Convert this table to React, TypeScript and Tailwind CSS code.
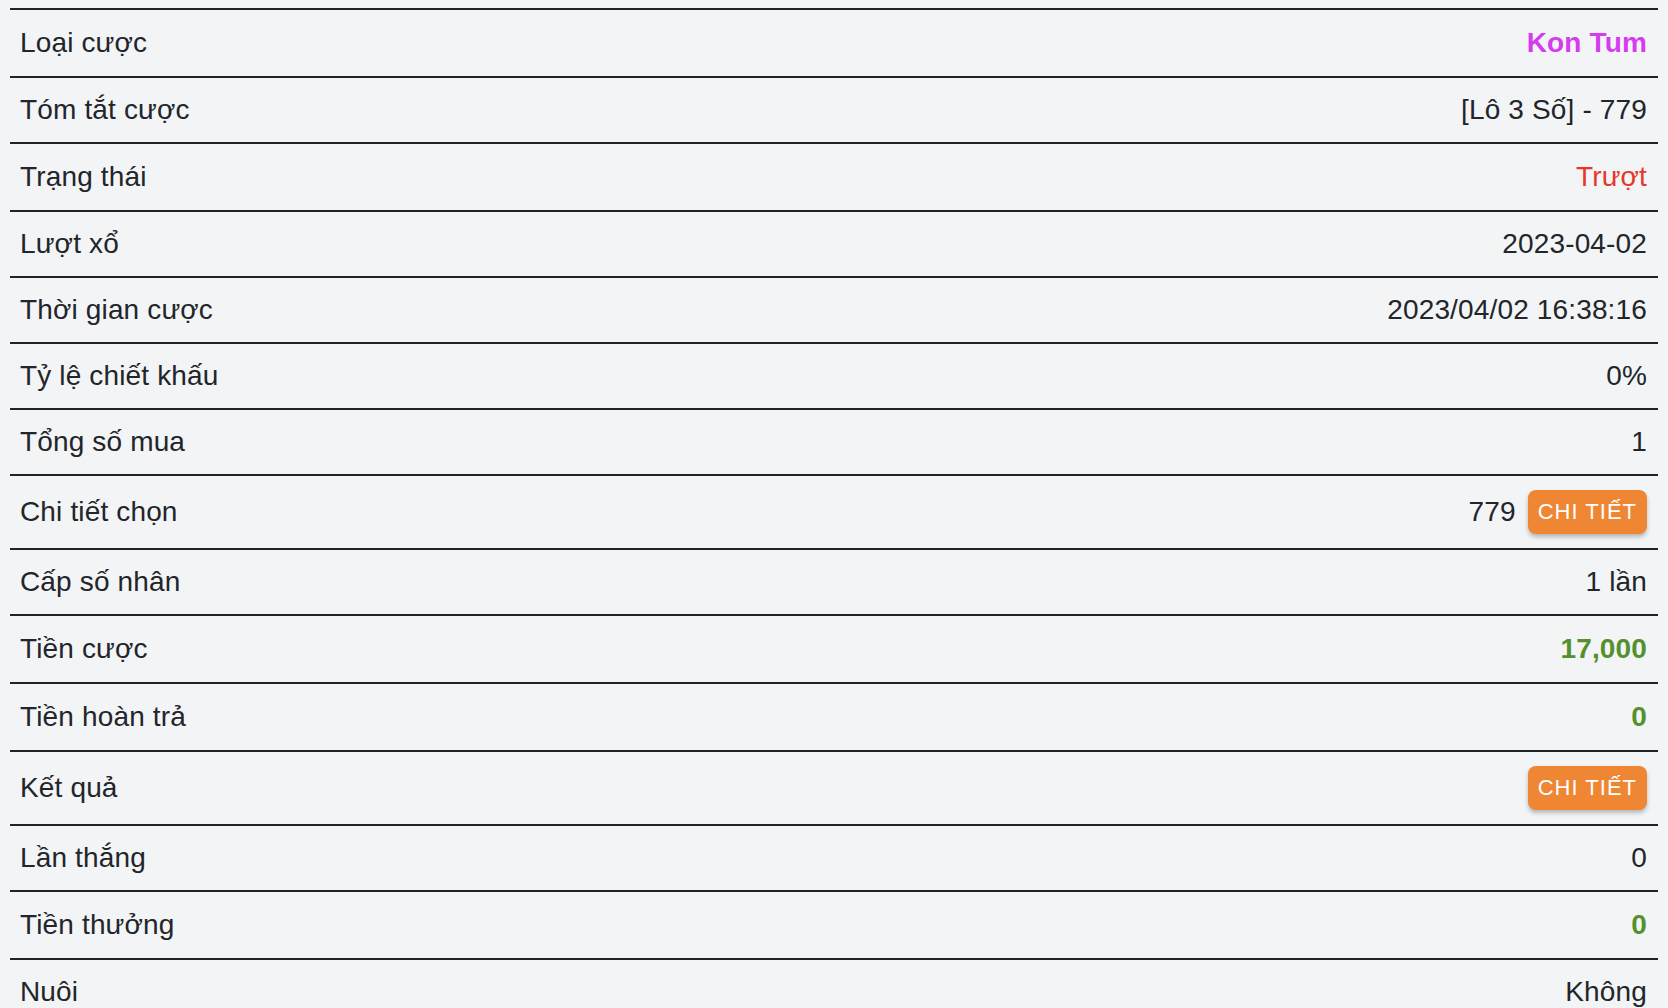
import React from 'react';

type Tone = 'plain' | 'pink' | 'red' | 'green';

interface Row {
  label: string;
  value?: string;
  tone?: Tone;
  button?: boolean;
}

const rows: Row[] = [
  { label: 'Loại cược', value: 'Kon Tum', tone: 'pink' },
  { label: 'Tóm tắt cược', value: '[Lô 3 Số] - 779' },
  { label: 'Trạng thái', value: 'Trượt', tone: 'red' },
  { label: 'Lượt xổ', value: '2023-04-02' },
  { label: 'Thời gian cược', value: '2023/04/02 16:38:16' },
  { label: 'Tỷ lệ chiết khấu', value: '0%' },
  { label: 'Tổng số mua', value: '1' },
  { label: 'Chi tiết chọn', value: '779', button: true },
  { label: 'Cấp số nhân', value: '1 lần' },
  { label: 'Tiền cược', value: '17,000', tone: 'green' },
  { label: 'Tiền hoàn trả', value: '0', tone: 'green' },
  { label: 'Kết quả', button: true },
  { label: 'Lần thắng', value: '0' },
  { label: 'Tiền thưởng', value: '0', tone: 'green' },
  { label: 'Nuôi', value: 'Không' },
];

const toneClass: Record<Tone, string> = {
  plain: 'text-[#22252a]',
  pink: 'font-bold text-[#d63cef]',
  red: 'text-[#e6372b]',
  green: 'font-bold text-[#54902c]',
};

function DetailButton() {
  return (
    <button className="h-[44px] px-[10px] rounded-[8px] bg-[#ef8633] text-white text-[22px] tracking-[1px] leading-none shadow-[0_3px_4px_rgba(0,0,0,0.25)]">
      CHI TIẾT
    </button>
  );
}

export default function App() {
  return (
    <div
      className="h-[1008px] overflow-hidden bg-[#f3f4f6] px-[10px] pt-[8px] text-[28px] tracking-[0.15px] text-[#22252a]"
      style={{ fontFamily: '"Liberation Sans", Arial, sans-serif' }}
    >
      {rows.map(row => {
        const tone = row.tone ?? 'plain';
        const lead = tone === 'plain' ? 'leading-[36px]' : 'leading-[38px]';
        return (
          <div
            key={row.label}
            className={`flex items-center justify-between border-t-2 border-[#1f2227] pl-[10px] pr-[11px] py-[14px] ${lead}`}
          >
            <span>{row.label}</span>
            <div className="flex items-center gap-[12px]">
              {row.value && <span className={toneClass[tone]}>{row.value}</span>}
              {row.button && <DetailButton />}
            </div>
          </div>
        );
      })}
    </div>
  );
}
